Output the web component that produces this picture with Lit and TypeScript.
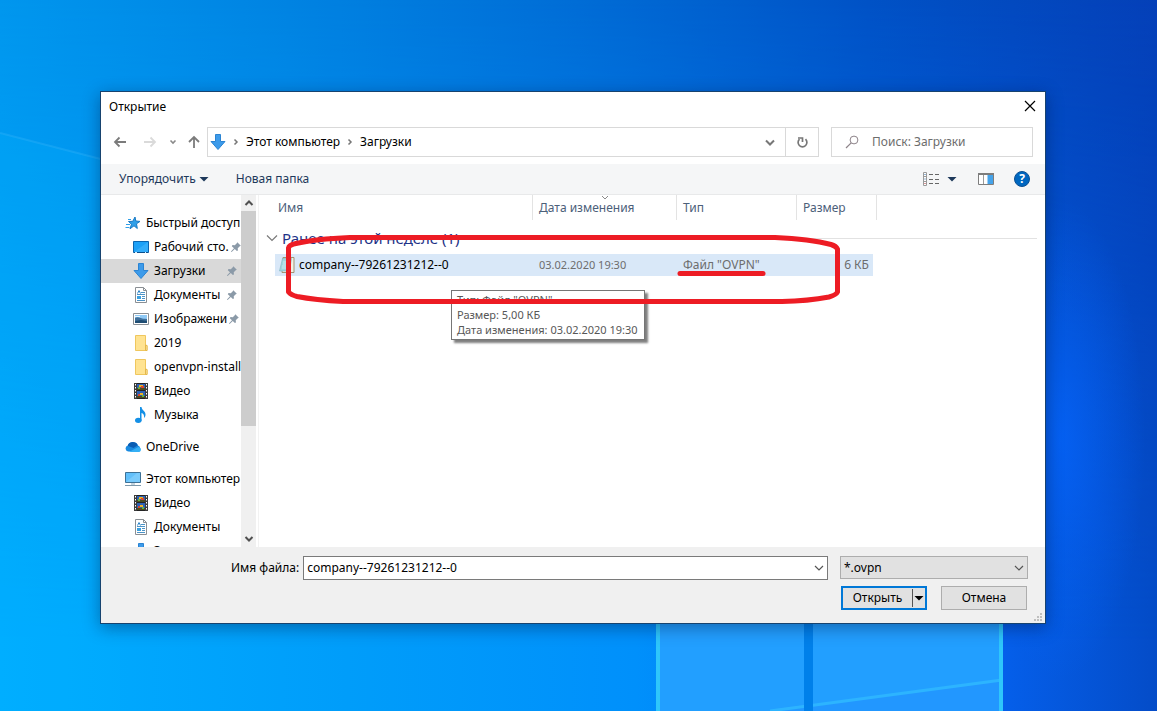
import { LitElement, html, svg, css } from "lit";
import { customElement, property } from "lit/decorators.js";

const arrowDown = svg`<path d="M5.500 .5h5v7h4.500L8 15.500 1 7.500h4.500z" fill="#3d9bea" stroke="#2b84d3"/>`;
const film = svg`
  <path d="M1 0h14v16H1z" fill="#3b3b3b"/>
  <path d="M4 0h8v16H4z" fill="#2d62b5"/>
  <path d="M4 0h8v1H4zM4 7h8v1H4zM4 15h8v1H4z" fill="#222"/>
  <path d="M4 5h8v2H4zM4 13h8v2H4z" fill="#4c4a1e"/>
  <path d="M6 2h4v2H6zM7 10h3v2H7z" fill="#f0b323"/>
  <path d="M8 3h3v2H8zM5 11h2v2H5z" fill="#d9472b"/>
  <path d="M5 4h2v2H5zM9 12h2v2H9z" fill="#5fb04a"/>
  <path d="M2.500 1v15M13.500 1v15" stroke="#fff" stroke-width="1" stroke-dasharray="1.500 1.500"/>`;
const page = svg`
  <path d="M2.500 .5h8l3 3v12h-11z" fill="#fff" stroke="#8a8f94"/>
  <path d="M10.500 .5v3h3" fill="none" stroke="#8a8f94"/>
  <path d="M8 5.500h4M4 7.500h8M9 9.500h3M9 11.500h3M4 13.500h8" stroke="#4d93c6"/>
  <path d="M4.500 6.500L6 3.500l1.500 3" fill="none" stroke="#2f86c8"/>
  <path d="M4 9h4v3H4z" fill="#3aa0e0"/>`;
const folder = svg`
  <path d="M2.500 .5h10v10l1.500 0v5H2.500z" fill="#ffe391" stroke="#efc75e"/>
  <path d="M12.500 10v5.500h1.500v-5z" fill="#fff0bb" stroke="#e5b84a"/>`;

const icons: Record<string, unknown> = {
  star: svg`
    <path d="M10 2l.8 4 4.200.4-3.500 2.400.8 4.700-3.300-2.700-4 3 1.500-4.600L3.500 6.500l4.300-.2z" fill="#2f9fe8" stroke="#1879c4"/>
    <path d="M3 4.500h3M.5 12.500h4M1 9.500h4" stroke="#2f9fe8"/>`,
  desktop: svg`
    <path d="M.5 2.500h15v11H.5z" fill="#1da1f7" stroke="#0b65b0"/>
    <path d="M1 13L15 3v10z" fill="#45b5fb" opacity=".6"/>
    <path d="M1 13.500h14" stroke="#0a4f8c"/><path d="M2 13.500h2M12 13.500h1" stroke="#d8efff"/>`,
  arrow: arrowDown,
  page,
  picture: svg`
    <path d="M.5 2.500h15v11H.5z" fill="#fff" stroke="#8a8f94"/>
    <path d="M2 4h12v8H2z" fill="#8fc9f5"/>
    <path d="M2 7c3-2 5 1 12 1v4H2z" fill="#3f6f9a"/>
    <path d="M2 10l6-1 6 1v2H2z" fill="#1f4d73"/><path d="M2 5h5v1H2z" fill="#e9f6ff"/>`,
  folder,
  film,
  note: svg`
    <path d="M7 0h1.500c.5 3.500 4 4 4 7.500 0 1.500-.5 2.500-1.500 3.500.5-3-.8-4.500-2.500-5v7.500H7z" fill="#1490e6"/>
    <ellipse cx="5.300" cy="13.300" rx="3.300" ry="2.600" fill="#1490e6"/>`,
  cloud: svg`
    <path d="M3 12.500A3 3 0 0 1 3 6.600 5.500 5.500 0 0 1 13 6.500a3.300 3.300 0 0 1 .5 6z" fill="#1a8ae0"/>
    <path d="M2.600 6.700A5.500 5.500 0 0 1 12.800 6.300L8.500 9z" fill="#0a5db3"/>
    <path d="M4 13L13.300 8c4 1 3 5 .2 5z" fill="#35b0f5"/>`,
  computer: svg`
    <path d="M.5 1.500h15v10H.5z" fill="#62c0fb" stroke="#3d7196"/>
    <path d="M1 11L12 2h3v9z" fill="#8bd2fd" opacity=".6"/>
    <path d="M6 12h4v2H6z" fill="#c5d4de"/><path d="M0 14.500h16" stroke="#7d98aa"/>`,
  notepad: svg`
    <path d="M4 .5h11v15H3z" fill="#f4f0e4" stroke="#a19372"/>
    <path d="M3.500 1.500h9l-2 12.500H.5z" fill="#9fd6de" stroke="#7fb6c0" stroke-width=".6"/>
    <path d="M4 5h6M4 7h6M3 9h6M3 11h6" stroke="#d9f1f4" stroke-width=".8"/>`,
  pin: svg`<path d="M9.500 2.500l4 4-1.200.5-2.300 2.300.2 2.600-1.200.8-2.400-2.400L3 13.800l-.8-.8 3.500-3.600L3.200 7l.8-1.200 2.600.2 2.300-2.300z" fill="#8b9aa8"/>`,
  back: svg`<path d="M14 8H3M7.500 3.500L3 8l4.500 4.500" fill="none" stroke="#7b7b7b" stroke-width="1.800"/>`,
  forward: svg`<path d="M2 8h11M8.500 3.500L13 8l-4.500 4.500" fill="none" stroke="#dadada" stroke-width="1.800"/>`,
  up: svg`<path d="M8 14V3M3 8l5-5 5 5" fill="none" stroke="#7b7b7b" stroke-width="1.800"/>`,
  recent: svg`<path d="M5.500 6.500L8 9l2.500-2.500" fill="none" stroke="#8a8a8a" stroke-width="1.600"/>`,
  crumb: svg`<path d="M6.500 5.500L9 8l-2.500 2.500" fill="none" stroke="#767676" stroke-width="1.500"/>`,
  chevronBold: svg`<path d="M4 6.500l4 4 4-4" fill="none" stroke="#777" stroke-width="2"/>`,
  chevron: svg`<path d="M4 6l4 4 4-4" fill="none" stroke="#555" stroke-width="1.200"/>`,
  group: svg`<path d="M3 5.500L8 10.500l5-5" fill="none" stroke="#7a7a7a" stroke-width="1.200"/>`,
  scrollUp: svg`<path d="M4.500 10L8 6.500 11.500 10" fill="none" stroke="#505050" stroke-width="2"/>`,
  scrollDown: svg`<path d="M4.500 6L8 9.500 11.500 6" fill="none" stroke="#505050" stroke-width="2"/>`,
  sort: svg`<path d="M5 6l3 3 3-3" fill="none" stroke="#8a8a8a"/>`,
  refresh: svg`<path d="M11.500 5.200A4.400 4.400 0 1 1 5.500 5.200" fill="none" stroke="#777" stroke-width="1.700"/><path d="M4 4h4.500v4" fill="none" stroke="#777" stroke-width="1.700"/>`,
  search: svg`<circle cx="10" cy="6" r="3.900" fill="none" stroke="#8d8389"/><path d="M7.200 8.800L2 14" stroke="#8d8389" stroke-width="1.200"/>`,
  close: svg`<path d="M3 2l10 10M13 2L3 12" fill="none" stroke="#000" stroke-width="1.200"/>`,
  view: svg`
    <path d="M.5 1.500h3v13h-3zM0 5.500h4M0 10.500h4" fill="#fff" stroke="#9a9a9a"/>
    <path d="M1.500 3.500h1M1.500 8h1" stroke="#2b6aa8"/><path d="M1.500 12.500h1" stroke="#b03030"/>
    <path d="M6 3.500h4M12 3.500h4M6 8.500h4M12 8.500h4M6 12.500h4M12 12.500h4" stroke="#666"/>`,
  preview: svg`
    <path d="M.5 2.500h15v11H.5z" fill="#fff" stroke="#7d7d7d"/><path d="M0 3h16" stroke="#7d7d7d" stroke-width="2"/>
    <path d="M5.500 4v9" stroke="#9a9a9a"/><path d="M9.500 4H15v9H9.500z" fill="#45a3ea"/>`,
  triangle: svg`<path d="M3.500 6h9L8 10.500z" fill="currentColor"/>`,
};

@customElement("ui-icon")
class UiIcon extends LitElement {
  @property() name = "";
  static styles = css`
    :host { display: inline-flex; flex: none; width: 16px; height: 16px; }
    svg { width: 100%; height: 100%; display: block; }
  `;
  render() {
    return html`<svg viewBox="0 0 16 16" aria-hidden="true">${icons[this.name]}</svg>`;
  }
}

interface Place { icon: string; label: string; pinned?: boolean; selected?: boolean }
interface PlaceGroup { icon: string; label: string; items: Place[] }

const places: PlaceGroup[] = [
  {
    icon: "star", label: "Быстрый доступ", items: [
      { icon: "desktop", label: "Рабочий сто.", pinned: true },
      { icon: "arrow", label: "Загрузки", pinned: true, selected: true },
      { icon: "page", label: "Документы", pinned: true },
      { icon: "picture", label: "Изображени", pinned: true },
      { icon: "folder", label: "2019" },
      { icon: "folder", label: "openvpn-install" },
      { icon: "film", label: "Видео" },
      { icon: "note", label: "Музыка" },
    ],
  },
  { icon: "cloud", label: "OneDrive", items: [] },
  {
    icon: "computer", label: "Этот компьютер", items: [
      { icon: "film", label: "Видео" },
      { icon: "page", label: "Документы" },
      { icon: "arrow", label: "Загрузки" },
    ],
  },
];

@customElement("desk-wallpaper")
class DeskWallpaper extends LitElement {
  static styles = css`
    :host { display: block; }
    svg { width: 100%; height: 100%; display: block; }
  `;
  render() {
    return html`<svg viewBox="0 0 1157 711" preserveAspectRatio="none" aria-hidden="true">
      <defs>
        <linearGradient id="low"><stop offset="0" stop-color="#00adff"/><stop offset=".3" stop-color="#009dfa"/><stop offset=".55" stop-color="#0090fb"/><stop offset=".86" stop-color="#0560ec"/><stop offset="1" stop-color="#044cc8"/></linearGradient>
        <linearGradient id="high"><stop offset="0" stop-color="#0096ee"/><stop offset=".25" stop-color="#0083e2"/><stop offset=".5" stop-color="#006cd6"/><stop offset=".75" stop-color="#0052c6"/><stop offset="1" stop-color="#0440b8"/></linearGradient>
        <linearGradient id="fade" x2="0" y2="1"><stop offset="0" stop-color="#fff"/><stop offset=".9" stop-color="#000"/></linearGradient>
        <mask id="m"><path d="M0 0h1157v711H0z" fill="url(#fade)"/></mask>
        <radialGradient id="glow"><stop offset="0" stop-color="#0566ff"/><stop offset="1" stop-color="#0566ff" stop-opacity="0"/></radialGradient>
      </defs>
      <path d="M0 0h1157v711H0z" fill="url(#low)"/>
      <path d="M0 0h1157v711H0z" fill="url(#high)" mask="url(#m)"/>
      <ellipse cx="1060" cy="440" rx="85" ry="240" fill="url(#glow)" opacity=".7"/>
      <path d="M0 133L120 164V711H0z" fill="#00b4ff" opacity=".2"/>
      <path d="M0 133L120 164" stroke="#3db8fa" stroke-width="2" opacity=".3"/>
      <path d="M658 600h345v111H658z" fill="#229fff"/>
      <path d="M770 711L1002 680v31z" fill="#2297ff"/>
      <path d="M770 711L1002 680" stroke="#2db4ff" stroke-width="3"/>
      <path d="M804 600h9v111h-9z" fill="#0080ea"/>
      <path d="M658 600v111M1001 600v111" stroke="#2ec6fb" stroke-width="4"/>
    </svg>`;
  }
}

@customElement("places-pane")
class PlacesPane extends LitElement {
  static styles = css`
    :host { display: flex; min-height: 0; overflow: hidden; color: #000; }
    .tree { flex: 1; min-width: 0; height: 0; min-height: 100%; padding-top: 16px; box-sizing: border-box; overflow: hidden; }
    .group { margin-bottom: 8px; }
    .place { display: flex; align-items: center; gap: 5px; height: 24px; padding-left: 24px; color: inherit; text-decoration: none; white-space: nowrap; }
    .child { padding-left: 32px; }
    .selected { background: #d9d9d9; }
    .label { flex: none; }
    .pin { width: 14px; margin-left: auto; margin-right: 2px; }
    .pinned { gap: 0; }
    .pinned .label { margin-left: 5px; }
    .bar { width: 15px; flex: none; display: flex; flex-direction: column; align-items: center; background: #f0f0f0; }
    .thumb { width: 100%; flex: 214; background: #cdcdcd; }
    .rest { flex: 104; }
    .edge { width: 3px; box-sizing: border-box; border-right: 1px solid #f2f2f2; }
  `;
  render() {
    return html`
      <nav class="tree">
        ${places.map(g => html`<div class="group">
          <a class="place" href="#"><ui-icon name=${g.icon}></ui-icon><span class="label">${g.label}</span></a>
          ${g.items.map(p => html`<a href="#" class="place child ${p.selected ? "selected" : ""} ${p.pinned ? "pinned" : ""}">
            <ui-icon name=${p.icon}></ui-icon><span class="label">${p.label}</span>
            ${p.pinned ? html`<ui-icon class="pin" name="pin"></ui-icon>` : ""}</a>`)}
        </div>`)}
      </nav>
      <div class="bar"><ui-icon name="scrollUp"></ui-icon><div class="thumb"></div><div class="rest"></div><ui-icon name="scrollDown"></ui-icon></div>
      <div class="edge"></div>`;
  }
}

@customElement("file-list")
class FileList extends LitElement {
  static styles = css`
    :host { display: block; position: relative; min-width: 0; padding-right: 8px; }
    table { width: 100%; table-layout: fixed; border-spacing: 0; color: #6d6d6d; }
    .gutter { width: 16px; } .name { width: 258px; } .date { width: 144px; } .type { width: 120px; } .size { width: 80px; }
    th, td { padding: 0; text-align: left; font-weight: 400; white-space: nowrap; }
    .head th { height: 26px; box-sizing: border-box; color: #4c607a; position: relative; padding-left: 6px; }
    .head .first { padding-left: 3px; }
    .head .ruled { background: linear-gradient(#e3e3e3, #e3e3e3) right top / 1px 25px no-repeat; }
    .sort { position: absolute; left: 50%; top: -5px; margin-left: -8px; }
    .band { display: flex; align-items: center; gap: 2px; height: 33px; padding: 1px 0 0 5px; box-sizing: border-box; font-size: 15px; color: #1e3287; }
    .rule { flex: 1; height: 1px; background: #e2e2e2; }
    .file td { height: 22px; background: #d9e8f8; padding-left: 6px; }
    .file .blank { background: none; }
    .file .title { padding-left: 4px; color: #000; }
    .file .when { font-size: 11px; }
    .cell { display: flex; align-items: center; gap: 4px; }
    .file .amount { text-align: right; padding: 0 4px 0 0; border-right: 4px solid transparent; background-clip: padding-box; }
    .tip { position: absolute; left: 192px; top: 95px; padding: 1px 6px 2px 5px; border: 1px solid #767676; background: #fff; color: #575757; font-size: 11px; line-height: 15px; white-space: nowrap; box-shadow: 3px 3px 2px rgba(0, 0, 0, .5); }
    .tip p { margin: 0; }
    .mark { position: absolute; left: 21px; top: 35px; width: 570px; height: 80px; pointer-events: none; }
  `;
  render() {
    return html`
      <table>
        <colgroup><col class="gutter"><col class="name"><col class="date"><col class="type"><col class="size"><col></colgroup>
        <thead><tr class="head"><th></th><th class="ruled first">Имя</th>
          <th class="ruled">Дата изменения<ui-icon class="sort" name="sort"></ui-icon></th>
          <th class="ruled">Тип</th><th class="ruled">Размер</th><th></th></tr></thead>
        <tbody>
          <tr><th colspan="6"><div class="band"><ui-icon name="group"></ui-icon><span>Ранее на этой неделе (1)</span><span class="rule"></span></div></th></tr>
          <tr class="file"><td class="blank"></td>
            <td class="title"><div class="cell"><ui-icon name="notepad"></ui-icon>company--79261231212--0</div></td>
            <td class="when">03.02.2020 19:30</td><td>Файл "OVPN"</td><td class="amount">6 КБ</td><td class="blank"></td></tr>
        </tbody>
      </table>
      <div class="tip" role="tooltip"><p>Тип: Файл "OVPN"</p><p>Размер: 5,00 КБ</p><p>Дата изменения: 03.02.2020 19:30</p></div>
      <svg class="mark" viewBox="280 230 570 80" aria-hidden="true" fill="none" stroke="#ed1c24" stroke-width="5" stroke-linecap="round" stroke-linejoin="round">
        <path d="M288.500 292V248Q289 245 296 243.500Q315 239 350 237.500H775Q810 239 831 244.500Q836 246 837.500 249V292Q836 295 829 297Q808 301 782 301.500H343Q315 300 297 296.500Q291 295 288.500 292z"/>
        <path d="M680 273.500H763"/>
      </svg>`;
  }
}

@customElement("app-root")
class AppRoot extends LitElement {
  static styles = css`
    :host { display: block; font: 12px/16px "Noto Sans", "Open Sans", sans-serif; color: #000; }
    .desktop { position: relative; display: flex; min-height: 100vh; box-sizing: border-box; padding: 91px 111px 87px 100px; }
    .wallpaper { position: absolute; inset: 0; }
    .dialog { position: relative; flex: 1; min-width: 0; display: flex; flex-direction: column; box-sizing: border-box; border: 1px solid #17436f; background: #fff; box-shadow: 0 4px 16px rgba(0, 20, 60, .4); }
    button, input, select { font: inherit; color: inherit; margin: 0; padding: 0; border: 0; background: none; border-radius: 0; outline: 0; }
    button { display: inline-flex; align-items: center; justify-content: center; }
    .title { display: flex; align-items: center; justify-content: space-between; height: 30px; padding: 0 7px 0 8px; }
    h1 { margin: 0; font-size: inherit; font-weight: 400; }
    .nav { display: flex; align-items: center; padding: 5px 12px 7px 11px; height: 30px; }
    .arrows { display: flex; align-items: center; width: 95px; }
    .arrows .forward { margin-left: 14px; }
    .arrows .recent { margin-left: 7px; }
    .arrows .up { margin-left: 5px; }
    .address { flex: 1; min-width: 0; display: flex; align-items: center; height: 30px; box-sizing: border-box; border: 1px solid #d9d9d9; }
    .crumbs { flex: 1; display: flex; align-items: center; padding-left: 2px; gap: 2px; }
    .crumbs ui-icon.where { width: 16px; height: 18px; }
    .crumbs a { color: inherit; text-decoration: none; }
    .drop { width: 30px; height: 28px; }
    .reload { width: 33px; height: 28px; border-left: 1px solid #d9d9d9; }
    .search { display: flex; align-items: center; gap: 12px; width: 202px; height: 30px; box-sizing: border-box; margin-left: 12px; padding-left: 12px; border: 1px solid #d9d9d9; }
    .search input { flex: 1; min-width: 0; }
    .search input::placeholder { color: #6d6d6d; opacity: 1; }
    .tools { display: flex; align-items: center; height: 30px; padding: 0 15px 0 18px; background: #f5f6f7; border-bottom: 1px solid #e8e9ea; color: #1e395b; }
    .tools .fresh { margin-left: 24px; }
    .tools .view { margin-left: auto; gap: 5px; }
    .tools .preview { margin-left: 18px; }
    .tools .help { margin-left: 20px; width: 16px; height: 16px; border-radius: 50%; background: #0067c0; border: 1px solid #0b4f92; box-sizing: border-box; color: #fff; font-weight: 700; }
    .body { flex: 1; display: grid; grid-template-columns: 158px 1fr; min-height: 0; }
    .foot { display: grid; grid-template-columns: 1fr 188px; column-gap: 12px; row-gap: 6px; height: 76px; box-sizing: border-box; padding: 9px 17px 0 130px; background: #f0f0f0; align-content: start; align-items: start; position: relative; }
    .name { display: flex; align-items: center; gap: 4px; white-space: nowrap; }
    .combo { flex: 1; min-width: 0; display: flex; align-items: center; height: 24px; box-sizing: border-box; border: 1px solid #7a7a7a; background: #fff; }
    .combo input { flex: 1; min-width: 0; padding-left: 3px; }
    .filter { display: grid; align-items: center; height: 23px; box-sizing: border-box; border: 1px solid #adadad; background: #e1e1e1; }
    .filter select, .filter ui-icon { grid-area: 1 / 1; }
    .filter select { appearance: none; width: 100%; padding-left: 3px; }
    .filter ui-icon { justify-self: end; pointer-events: none; }
    .acts { grid-column: 2; display: flex; justify-content: space-between; padding: 0 1px; }
    .open { display: flex; width: 86px; height: 24px; box-sizing: border-box; border: 2px solid #0078d7; background: #e1e1e1; }
    .open .go { flex: 1; }
    .open .more { width: 13px; margin: 1px 0; border-left: 1px solid #555; overflow: hidden; }
    .cancel { width: 86px; height: 24px; box-sizing: border-box; border: 1px solid #adadad; background: #e1e1e1; }
    .grip { position: absolute; right: 3px; bottom: 2px; width: 8px; height: 8px; }
  `;
  render() {
    return html`<div class="desktop">
      <desk-wallpaper class="wallpaper"></desk-wallpaper>
      <section class="dialog" role="dialog" aria-labelledby="caption">
        <header class="title"><h1 id="caption">Открытие</h1><button aria-label="Закрыть"><ui-icon name="close"></ui-icon></button></header>
        <div class="nav">
          <div class="arrows">
            <button aria-label="Назад"><ui-icon name="back"></ui-icon></button>
            <button class="forward" aria-label="Вперед"><ui-icon name="forward"></ui-icon></button>
            <button class="recent" aria-label="Последние"><ui-icon name="recent"></ui-icon></button>
            <button class="up" aria-label="Вверх"><ui-icon name="up"></ui-icon></button>
          </div>
          <div class="address">
            <div class="crumbs"><ui-icon class="where" name="arrow"></ui-icon><ui-icon name="crumb"></ui-icon><a href="#">Этот компьютер</a><ui-icon name="crumb"></ui-icon><a href="#">Загрузки</a></div>
            <button class="drop" aria-label="Предыдущие расположения"><ui-icon name="chevronBold"></ui-icon></button>
            <button class="reload" aria-label="Обновить"><ui-icon name="refresh"></ui-icon></button>
          </div>
          <label class="search"><ui-icon name="search"></ui-icon><input type="search" aria-label="Поиск" placeholder="Поиск: Загрузки"></label>
        </div>
        <div class="tools">
          <button>Упорядочить<ui-icon name="triangle"></ui-icon></button>
          <button class="fresh">Новая папка</button>
          <button class="view" aria-label="Вид"><ui-icon name="view"></ui-icon><ui-icon name="triangle"></ui-icon></button>
          <button class="preview" aria-label="Область просмотра"><ui-icon name="preview"></ui-icon></button>
          <button class="help" aria-label="Справка">?</button>
        </div>
        <div class="body"><places-pane></places-pane><file-list></file-list></div>
        <footer class="foot">
          <div class="name"><label for="file">Имя файла:</label>
            <div class="combo"><input id="file" type="text" value="company--79261231212--0"><button aria-label="Показать список"><ui-icon name="chevron"></ui-icon></button></div></div>
          <div class="filter"><select aria-label="Тип файлов"><option>*.ovpn</option></select><ui-icon name="chevron"></ui-icon></div>
          <div class="acts">
            <div class="open"><button class="go">Открыть</button><button class="more" aria-label="Другие действия"><ui-icon name="triangle"></ui-icon></button></div>
            <button class="cancel">Отмена</button>
          </div>
          <svg class="grip" viewBox="0 0 8 8" aria-hidden="true"><path d="M6 0h2v2H6zM3 3h2v2H3zM6 3h2v2H6zM0 6h2v2H0zM3 6h2v2H3zM6 6h2v2H6z" fill="#bfbfbf"/></svg>
        </footer>
      </section>
    </div>`;
  }
}
